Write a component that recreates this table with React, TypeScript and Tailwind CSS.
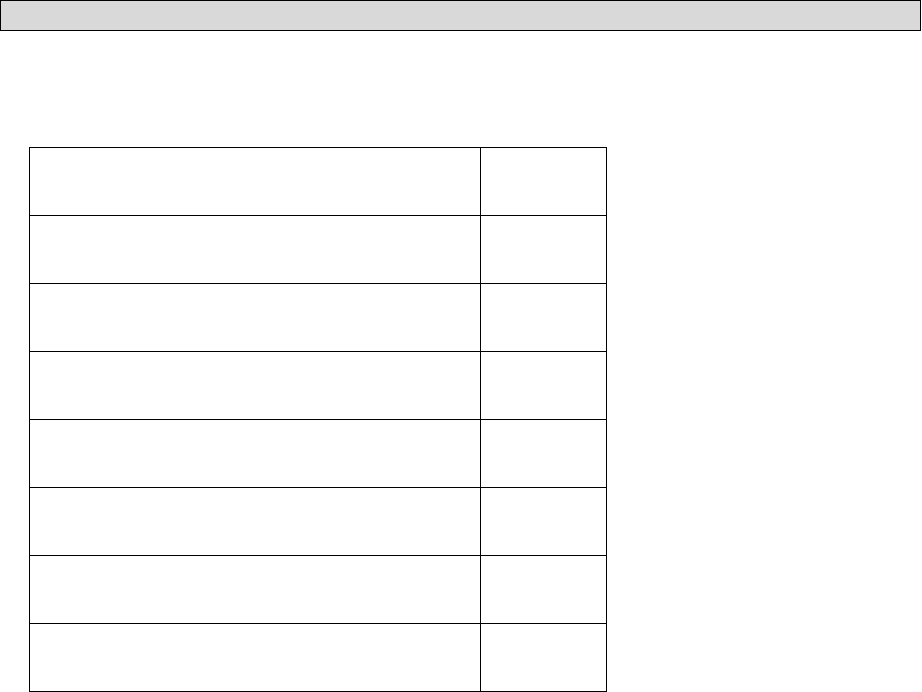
export default function App() {
  const rows = Array.from({ length: 8 });
  return (
    <div className="w-[922px] h-[692px] bg-white overflow-hidden">
      <div className="w-[921px] h-[31px] bg-[#d9d9d9] border border-black" />
      <div className="pl-[29px] pt-[116px]">
        <table className="border-collapse">
          <tbody>
            {rows.map((_, i) => (
              <tr key={i} className="h-[68px]">
                <td className="w-[451px] border border-black p-0" />
                <td className="w-[126px] border border-black p-0" />
              </tr>
            ))}
          </tbody>
        </table>
      </div>
    </div>
  );
}
